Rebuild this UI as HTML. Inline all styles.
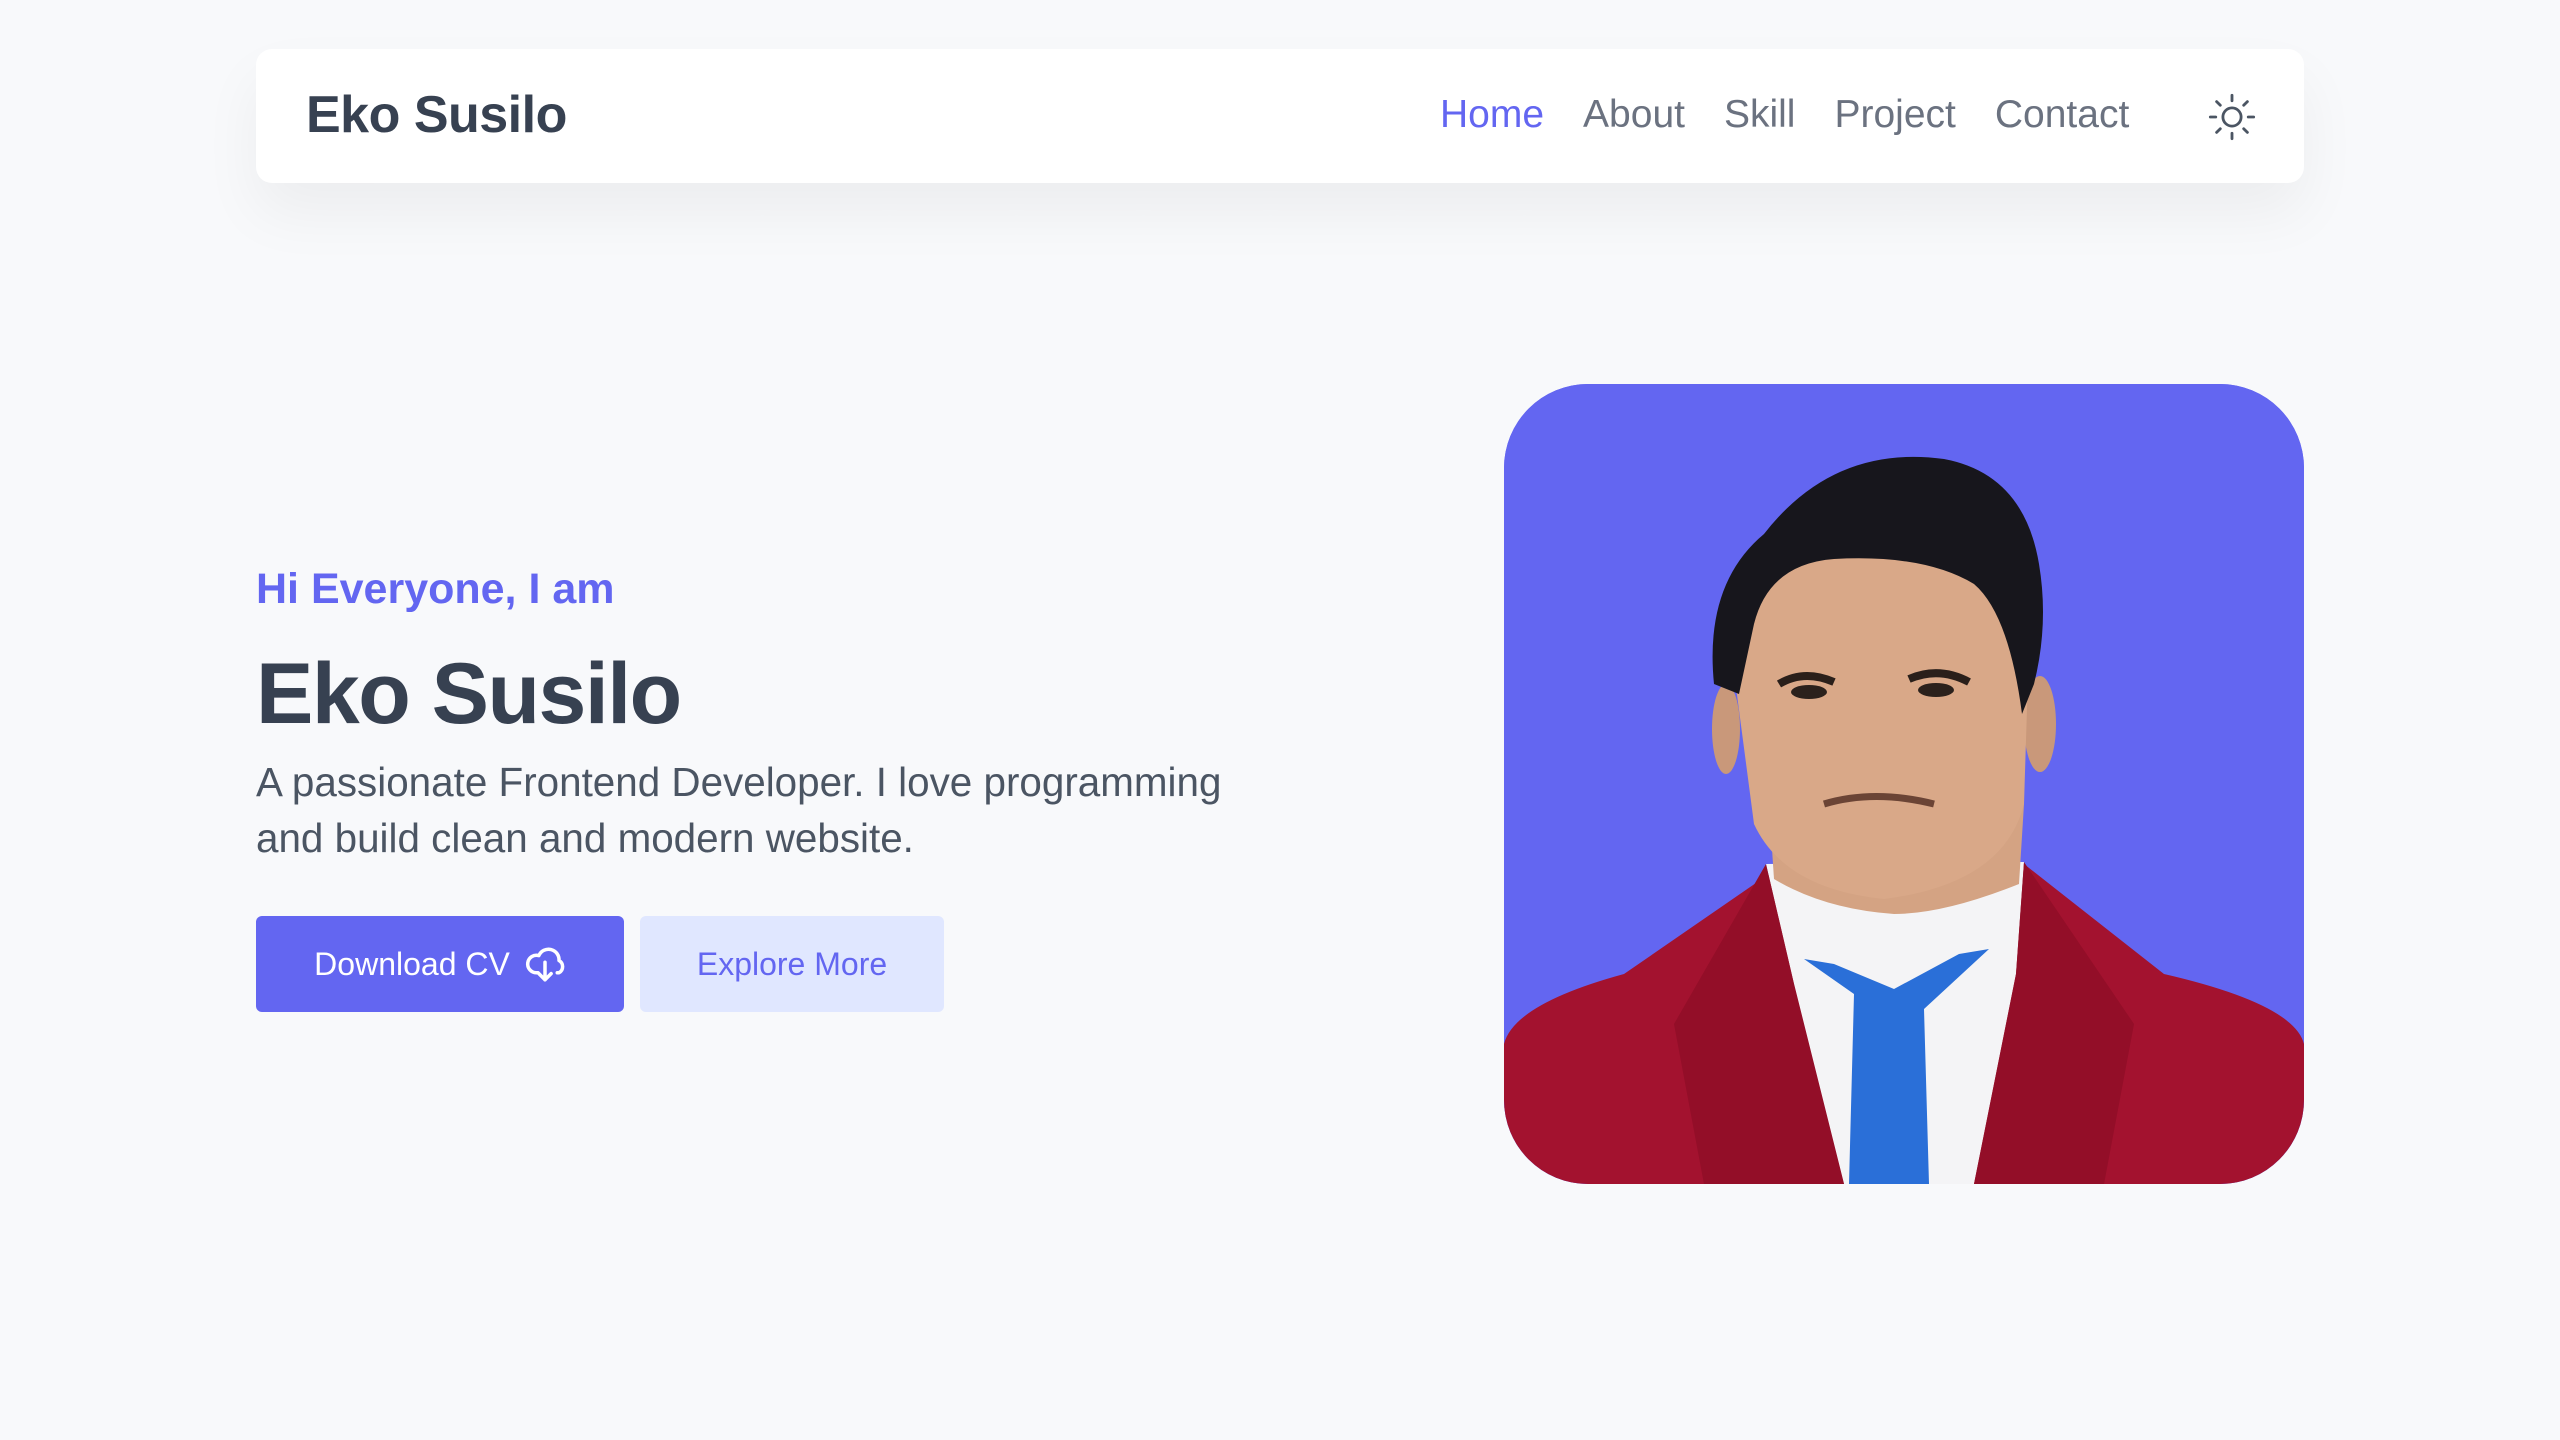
<!DOCTYPE html>
<html><head><meta charset="utf-8"><style>
*{margin:0;padding:0;box-sizing:border-box}
body{width:2560px;height:1440px;background:#f8f9fb;font-family:"Liberation Sans",sans-serif;position:relative;overflow:hidden}
.nav{position:absolute;left:256px;top:49px;width:2048px;height:134px;background:#fff;border-radius:16px;box-shadow:0 30px 60px rgba(0,0,0,0.05)}
.logo{position:absolute;left:50px;top:36px;font-size:52px;font-weight:bold;color:#374151;letter-spacing:-0.5px}
.links{position:absolute;left:1184px;top:44px;font-size:39px;color:#6b7280;display:flex;gap:39px}
.links .a{color:#6366f1}
.sun{position:absolute;left:1950px;top:42px}
.hi{position:absolute;left:256px;top:565px;font-size:43px;font-weight:bold;color:#6366f1}
.name{position:absolute;left:256px;top:645px;font-size:86px;font-weight:bold;color:#374151;letter-spacing:-1.5px}
.p{position:absolute;left:256px;top:754px;font-size:40.4px;line-height:56px;color:#4b5563;width:1100px}
.b1{position:absolute;left:256px;top:916px;width:368px;height:96px;background:#6366f1;border-radius:6px;color:#fff;font-size:32px;display:flex;align-items:center;justify-content:center;gap:14px}
.b2{position:absolute;left:640px;top:916px;width:304px;height:96px;background:#e0e7ff;border-radius:6px;color:#6366f1;font-size:32px;display:flex;align-items:center;justify-content:center}
.img{position:absolute;left:1504px;top:384px;width:800px;height:800px;border-radius:84px;overflow:hidden;background:#6366f1}
</style></head><body>
<div class="nav">
<div class="logo">Eko Susilo</div>
<div class="links"><span class="a">Home</span><span>About</span><span>Skill</span><span>Project</span><span>Contact</span></div>
<svg class="sun" width="52" height="52" viewBox="0 0 24 24" fill="none" stroke="#4b5563" stroke-width="1.3" stroke-linecap="round"><circle cx="12" cy="12" r="4.2"/><path d="M12 2v2.5M12 19.5V22M2 12h2.5M19.5 12H22M4.9 4.9l1.7 1.7M17.4 17.4l1.7 1.7M4.9 19.1l1.7-1.7M17.4 6.6l1.7-1.7"/></svg>
</div>
<div class="hi">Hi Everyone, I am</div>
<div class="name">Eko Susilo</div>
<div class="p">A passionate Frontend Developer. I love programming<br>and build clean and modern website.</div>
<div class="b1">Download CV <svg width="42" height="42" viewBox="0 0 24 24" fill="none" stroke="#fff" stroke-width="2" stroke-linecap="round" stroke-linejoin="round"><path d="M8 17H7a5 5 0 1 1 1.5-9.8A6 6 0 0 1 20 10a4 4 0 0 1 0 7h-1"/><path d="M12 11v10M8.5 17.5L12 21l3.5-3.5"/></svg></div>
<div class="b2">Explore More</div>
<div class="img"><svg width="800" height="800" viewBox="0 0 800 800">
<rect width="800" height="800" fill="#6366f1"/>
<path d="M0 660 Q10 620 120 590 L265 490 L520 480 L660 590 Q790 620 800 660 L800 800 L0 800Z" fill="#a3122f"/>
<path d="M262 480 L520 478 L512 590 L470 800 L340 800 L290 600Z" fill="#f4f4f6"/>
<path d="M300 575 L350 610 L345 800 L425 800 L420 625 L485 565 L455 570 L390 605 L330 580Z" fill="#2a6fd8"/>
<path d="M262 480 L290 600 L340 800 L200 800 L170 640Z" fill="#930e28"/>
<path d="M520 478 L512 590 L470 800 L600 800 L630 640Z" fill="#930e28"/>
<path d="M265 420 L520 420 L515 500 Q440 530 390 530 Q320 525 270 495Z" fill="#d4a383"/>
<ellipse cx="222" cy="345" rx="14" ry="45" fill="#c9987a"/>
<ellipse cx="536" cy="340" rx="16" ry="48" fill="#c9987a"/>
<path d="M225 250 Q230 160 300 150 L470 150 Q530 170 525 260 L520 420 Q500 500 380 515 Q280 505 250 440 Z" fill="#d9a888"/>
<path d="M210 300 Q200 200 260 150 Q330 60 440 75 Q520 90 535 180 Q545 240 530 300 L518 330 Q505 230 470 200 Q420 170 330 175 Q265 180 250 240 L235 310Z" fill="#17161c"/>
<path d="M275 300 Q300 285 330 298 M405 295 Q435 282 465 298" stroke="#2a1f1a" stroke-width="8" fill="none"/>
<ellipse cx="305" cy="308" rx="18" ry="7" fill="#2b211c"/><ellipse cx="432" cy="306" rx="18" ry="7" fill="#2b211c"/>
<path d="M320 420 Q370 405 430 420" stroke="#6b4435" stroke-width="7" fill="none"/>
</svg></div>
</body></html>
